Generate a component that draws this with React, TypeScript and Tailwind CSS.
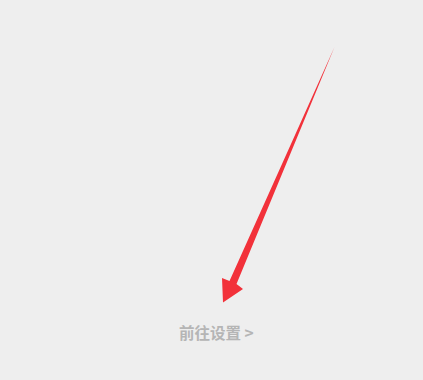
import React from "react";

export default function App() {
  return (
    <div className="relative w-[423px] h-[380px] bg-[#eeeeee] overflow-hidden">
      <svg
        className="absolute left-0 top-0"
        width="423"
        height="380"
        viewBox="0 0 423 380"
      >
        <polygon
          points="334.5,47 236.5,284 243,289 223,302.5 222,278 229.5,281"
          fill="#f2313a"
        />
      </svg>
      <div className="flex pt-[322px] pl-[179px]">
        <span
          className="text-[15.5px] leading-[20px] font-bold text-[#b5b5b5]"
          style={{ fontFamily: '"Noto Sans CJK SC", "Noto Sans", sans-serif' }}
        >
          前往设置 &gt;
        </span>
      </div>
    </div>
  );
}
